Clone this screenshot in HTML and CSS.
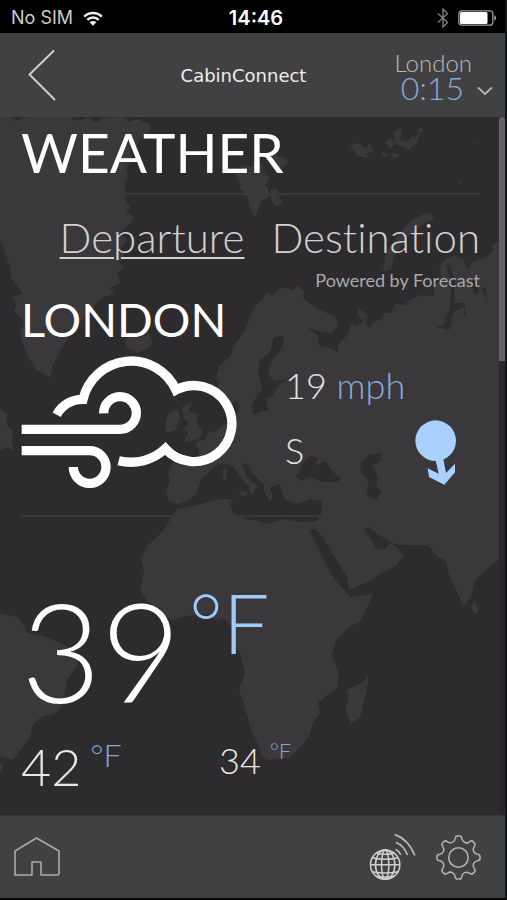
FILE: index.html
```html
<!DOCTYPE html>
<html lang="en">
<head>
<meta charset="utf-8">
<meta name="viewport" content="width=device-width, initial-scale=1">
<title>CabinConnect</title>
<link rel="stylesheet" href="styles.css">
</head>
<body>
<div class="app">
  <div class="status">
    <div class="status-left">
      <span>No SIM</span>
      <svg class="wifi" viewBox="0 0 20 15" aria-hidden="true">
        <g fill="none" stroke="#eee" stroke-width="2.4"><path d="M1.2 5.6A12.4 12.4 0 0 1 18.800 5.600"/><path d="M4.300 8.900A8 8 0 0 1 15.700 8.900"/></g>
        <path d="M6.600 11.300A4.800 4.800 0 0 1 13.400 11.300L10 14.800Z" fill="#eee"/>
      </svg>
    </div>
    <span class="clock">14:46</span>
    <div class="status-right">
      <svg class="bluetooth" viewBox="0 0 12 20" aria-hidden="true"><path d="M1 5.500 10.500 14.500 6 19V1L10.500 5.500 1 14.500" fill="none" stroke="#7c7c7c" stroke-width="1.400"/></svg>
      <svg class="battery" viewBox="0 0 39 16" aria-hidden="true"><rect x=".8" y=".8" width="34" height="14.400" rx="3" fill="none" stroke="#999" stroke-width="1.300"/><rect x="2" y="2" width="27.500" height="12" rx="1.500" fill="#fff"/><path d="M36.500 5Q39 8 36.500 11Z" fill="#eee"/></svg>
    </div>
  </div>

  <header class="topbar">
    <button class="icon-button" aria-label="Back">
      <svg class="back" viewBox="0 0 28 52"><path d="M26 1.500 1.500 25.500 27 51" fill="none" stroke="#d5d5d5" stroke-width="1.800"/></svg>
    </button>
    <div class="brand">CabinConnect</div>
    <button class="city-time">
      <span class="city">London</span>
      <span class="time">0:15</span>
      <svg class="chevron" viewBox="0 0 16 10" aria-hidden="true"><path d="M1 1.500 8 8 15 1.500" fill="none" stroke="#b5b5b7" stroke-width="1.800"/></svg>
    </button>
  </header>

  <main class="screen">
    <svg class="map" viewBox="0 117 505 698" preserveAspectRatio="xMidYMid slice" aria-hidden="true">
      <g fill="#3a383b">
        <path d="M0 117H12L15 121 27 117H70L76 121 88 118 96 122 104 118 124 117 128 122 138 119 151 125 149 133 140 139 137 145 130 150 132 160 126 168 128 177 124 184 126 193 125 201 130 206 126 211 134 218 129 225 120 233 127 240 121 248 124 257 119 262 124 267 117 273 121 283 110 288 114 294 103 297 96 303 91 312 79 323 70 336 61 349 53 365 50 378 43 373 37 370 30 360 25 350 20 333 24 322 14 311 17 302 12 297 24 294 17 286 11 278 10 267 5 251 0 240Z"/>
        <path d="M124 342 130 334 137 338 149 334 153 342 148 348 137 353 128 349Z"/>
        <path d="M0 409 8 414 6 424 13 430 12 442 14 450 6 447 0 451Z"/>
        <path d="M235 175 242 169 240 165 252 167 254 159 262 164 263 171 270 178 266 184 270 196 261 201 255 218 250 208 247 195 240 189 239 181ZM267 158 275 154 289 161 284 168 274 166ZM270 190 276 188 282 202 277 207 271 201Z"/>
        <path d="M350 145 360 143 364 149 370 144 374 151 366 154 369 158 358 156ZM385 142 391 138 395 144 390 149ZM395 131 402 127 400 140 407 142 402 147 394 143ZM412 136 420 132 417 143 409 149 403 147ZM413 138 423 131 421 126 406 149ZM381 151 388 154 384 158ZM390 153 399 154 396 159ZM456 179 463 184 460 184ZM473 141 476 143 474 145Z"/>
        <path d="M383 272 386 253 392 243 400 233 412 220 426 213 433 214 433 219 422 225 410 234 401 246 394 256 391 270Z"/>
        <path d="M505 240 493 244 492 252 486 257 472 262 467 269 463 259 454 255 445 260 439 266 442 281 435 285 433 296 421 295 411 299 404 305 395 304 391 313 384 313 382 319 374 322 370 328 366 325 368 315 359 309 357 313 363 322 357 326 351 324 349 333 338 345 338 352 329 348 319 346 318 337 308 327 318 331 331 333 338 326 336 317 322 311 309 303 303 298 305 292 298 286 292 290 284 287 278 290 274 295 266 293 262 300 256 305 251 314 247 326 239 339 233 347 231 356 219 366 216 377 219 384 216 391 220 403 228 407 237 400 240 407 234 418 223 425 216 431 209 432 205 439 195 443 199 450 200 462 188 466 173 463 168 472 170 481 166 492 169 501 178 504 190 500 197 493 201 479 208 474 215 466 225 463 233 466 242 479 249 486 251 496 255 489 259 488 248 478 241 465 246 463 253 474 263 484 265 494 270 502 273 496 270 487 280 484 282 493 286 500 298 504 309 499 322 501 321 514 317 521 301 522 282 519 268 524 255 520 246 519 233 513 230 504 234 499 220 499 205 503 188 507 177 509 170 520 163 530 158 536 147 546 141 559 144 570 142 583 140 590 147 600 158 613 173 620 187 616 209 614 215 620 224 618 233 630 234 643 240 653 245 673 239 690 245 707 250 727 256 740 262 756 268 760 290 757 298 749 305 742 310 734 313 722 320 713 318 703 328 694 337 688 339 673 332 655 336 640 347 629 360 621 367 608 373 594 350 597 341 586 335 580 327 566 321 554 309 529 315 529 323 537 332 553 340 566 347 577 349 590 371 580 385 571 396 566 404 555 395 546 390 543 384 550 377 549 369 537 364 529 369 527 378 534 388 541 398 545 412 545 428 545 438 557 446 561 449 575 457 592 464 607 471 597 475 580 488 568 505 555Z"/>
        <path d="M182 407 191 402 189 411 198 415 196 423 203 431 199 439 184 442 188 433 183 429 189 424 184 419ZM168 414 177 409 180 416 176 430 167 433 165 424Z"/>
        <path d="M0 613 17 617 25 627 27 633 47 637 60 643 76 651 78 663 67 680 63 703 57 713 41 717 33 724 30 737 20 751 13 760 0 757ZM0 762 3 765 0 774Z"/>
        <path d="M368 675 368 685 360 718 351 723 345 710 348 700 347 690 363 682ZM474 601 479 610 475 614 471 608ZM223 470 226 468 227 479 223 480ZM238 491 248 492 243 497Z"/>
      </g>
      <g fill="#2d2b2d">
        <path d="M274 337 284 336 282 347 270 364 268 375 275 381 287 379 278 386 273 396 266 398 268 410 253 414 252 405 256 397 262 389 258 371 260 360 270 352Z"/>
        <path d="M296 478 304 462 310 456 318 458 315 466 326 461 333 472 341 478 337 482 323 482 309 477 301 481Z"/>
        <path d="M360 463 369 455 381 453 380 462 372 465 378 477 376 486 382 492 377 500 366 494 369 481 361 472Z"/>
        <path d="M446 264 451 284 450 308 443 325 436 327 449 330 454 312 465 306 463 316 466 315 464 303 454 303 455 282 450 265ZM472 280 474 296 479 292 477 281ZM481 290 488 299 485 286ZM341 318 351 309 350 327 343 325Z"/>
      </g>
    </svg>

    <div class="content">
      <h1>WEATHER</h1>
      <nav class="tabs">
        <a class="tab current" href="#departure">Departure</a>
        <a class="tab" href="#destination">Destination</a>
      </nav>
      <p class="credit">Powered by Forecast</p>

      <section class="wind" id="departure">
        <h2>LONDON</h2>
        <svg class="cloud" viewBox="60 200 651 402" role="img" aria-label="Windy and cloudy">
          <g fill="none" stroke="#fff" stroke-width="28">
            <path d="M167 379A88 88 0 0 1 246 333A148 148 0 0 1 525 305A114 114 0 1 1 493 481A150 150 0 0 1 353 517"/>
            <path d="M62 423H357A49 49 0 1 0 308 375"/>
            <path d="M62 487H265A49 49 0 1 1 217 536"/>
          </g>
        </svg>
        <div class="wind-data">
          <p class="reading">19 <span class="unit">mph</span></p>
          <div class="direction">
            <p class="reading">S</p>
            <svg class="arrow" viewBox="484 391 123 195" role="img" aria-label="Wind direction"><circle cx="546" cy="453" r="61"/><path d="M545 508 555 552 522 536 526 562 572 585 604 548V522L577 550 569 508Z"/></svg>
          </div>
        </div>
      </section>

      <section class="temperature">
        <p class="now">39<span class="degree">°F</span></p>
        <div class="range">
          <p class="high">42<span class="degree">°F</span></p>
          <p class="low">34<span class="degree">°F</span></p>
        </div>
      </section>
    </div>
    <div class="scroll-track"><div class="scroll-thumb"></div></div>
  </main>

  <footer class="bottombar">
    <button class="icon-button" aria-label="Home">
      <svg class="home" viewBox="0 0 46 40"><path d="M1 38V14L22.500 1 45 14V36Q45 38 43 38H27V25H18V38Z" fill="none" stroke="#aaa" stroke-width="1.600" stroke-linejoin="round"/></svg>
    </button>
    <div class="actions">
      <button class="icon-button" aria-label="Connection">
        <svg class="globe" viewBox="56 70 140 144">
          <g fill="none" stroke="#d0d0d0" stroke-width="4.500">
            <circle cx="104" cy="165" r="44"/><ellipse cx="104" cy="165" rx="29" ry="44"/><ellipse cx="104" cy="165" rx="11" ry="44"/>
            <path d="M60 165H148M65 144Q104 153 143 144M65 186Q104 194 143 186M76 130Q104 138 132 130M76 200Q104 204 132 200"/>
          </g>
          <path d="M135 119Q146 124 151 136M136 98Q160 108 171 136M133 75Q173 88 193 137" fill="none" stroke="#bbb" stroke-width="5"/>
        </svg>
      </button>
      <button class="icon-button" aria-label="Settings">
        <svg class="gear" viewBox="-67 -67 134 134">
          <defs><path id="tooth" d="M-10-56Q-9-64-4-64H4Q9-64 10-56C12-45 24-40 32.500-46.700"/></defs>
          <g fill="none" stroke="#b4b4b4" stroke-width="4.500">
            <circle r="29"/>
            <use href="#tooth"/><use href="#tooth" transform="rotate(45)"/><use href="#tooth" transform="rotate(90)"/><use href="#tooth" transform="rotate(135)"/><use href="#tooth" transform="rotate(180)"/><use href="#tooth" transform="rotate(225)"/><use href="#tooth" transform="rotate(270)"/><use href="#tooth" transform="rotate(315)"/>
          </g>
        </svg>
      </button>
    </div>
  </footer>
</div>
</body>
</html>
```
FILE: styles.css
```css
* { box-sizing: border-box; }
body, h1, h2, p { margin: 0; }
body { background: #101518; color: #fff; font-family: Lato, sans-serif; font-weight: 300; font-variant-ligatures: none; }
button { border: 0; padding: 0; background: none; color: inherit; font: inherit; cursor: pointer; }
svg { display: block; flex: none; }

.app { min-height: 100vh; display: flex; flex-direction: column; border-right: 2px solid #101518; border-bottom: 2px solid #080808; }

.status { height: 33px; padding: 3px 8px 0 11px; background: #000; display: grid; grid-template-columns: 1fr auto 1fr; align-items: center; font: 400 18px/24px Inter, sans-serif; color: #ccc; }
.status-left, .status-right { display: flex; align-items: center; gap: 10px; }
.status-right { justify-content: flex-end; gap: 9px; }
.clock { padding-left: 4px; color: #fff; font-weight: 600; font-size: 20px; }
.wifi { width: 20px; height: 15px; }
.bluetooth { width: 12px; height: 20px; }
.battery { width: 39px; height: 16px; }

.topbar { height: 84px; padding: 0 12px 0 28px; background: #414042; display: grid; grid-template-columns: 1fr auto 1fr; align-items: center; }
.back { width: 28px; height: 52px; }
.brand { margin-right: 34px; padding-top: 2px; font: 400 18px/24px "DejaVu Sans", sans-serif; color: #eee; }
.city-time { justify-self: end; display: grid; grid-template-columns: auto 16px; column-gap: 13px; justify-items: end; align-items: center; }
.city { grid-column: 1 / 3; margin-right: 21px; font-size: 24px; line-height: 26px; color: #b9b9bb; }
.time { font-size: 32px; line-height: 24px; color: #8ba8d6; }
.chevron { width: 16px; height: 10px; margin-top: 6px; }

.screen { position: relative; flex: 1; background: #2d2b2d; overflow: hidden; }
.map { position: absolute; inset: 0; width: 100%; height: 100%; }
.content { position: relative; padding: 0 25px 0 21px; }
h1 { font-size: 55px; line-height: 70px; font-weight: 400; padding-bottom: 6px; border-bottom: 2px solid #39383b; }
.tabs { display: flex; justify-content: flex-end; gap: 27px; padding-top: 16px; font-size: 42px; line-height: 52px; }
.tab { color: #d2d2d2; text-decoration: none; }
.current { text-decoration: underline; text-decoration-thickness: 2px; text-underline-offset: 4px; }
.credit { text-align: right; font-size: 18px; line-height: 34px; font-weight: 400; color: #aaa; }
.wind { display: grid; grid-template-columns: 264px 1fr; padding-bottom: 26px; border-bottom: 2px solid #39383b; }
h2 { grid-column: 1 / 3; font-size: 47px; line-height: 44px; padding-bottom: 14px; font-weight: 400; }
.cloud { width: 217px; height: 134px; }
.reading { font-size: 36px; line-height: 60px; color: #e4e4e4; }
.unit { color: #86aadd; }
.direction { display: flex; justify-content: space-between; padding: 5px 24px 0 0; }
.arrow { width: 41px; height: 65px; fill: #a9d0ff; }
.now { display: flex; gap: 8px; font-size: 138px; line-height: 166px; padding-top: 50px; }
.degree { color: #a1cbfb; }
.now .degree { font-size: 82px; line-height: 110px; }
.range { display: grid; grid-template-columns: 198px 1fr; }
.high, .low { display: flex; gap: 9px; color: #e8e8e8; }
.high { font-size: 52px; line-height: 66px; }
.low { font-size: 36px; line-height: 54px; }
.range .degree { color: #86a6d8; }
.high .degree { font-size: 32px; line-height: 44px; }
.low .degree { font-size: 22px; line-height: 36px; }
.scroll-track { position: absolute; top: 0; right: 0; bottom: 0; width: 6px; background: #29282a; }
.scroll-thumb { height: 35%; background: #636265; border-radius: 3px 3px 0 0; }

.bottombar { height: 83px; padding: 0 24px 0 14px; background: #414042; display: flex; justify-content: space-between; align-items: center; border-top: 1px solid #373638; }
.actions { display: flex; align-items: center; gap: 20px; }
.home { width: 46px; height: 40px; }
.globe { width: 47px; height: 48px; }
.gear { width: 45px; height: 45px; }
```
